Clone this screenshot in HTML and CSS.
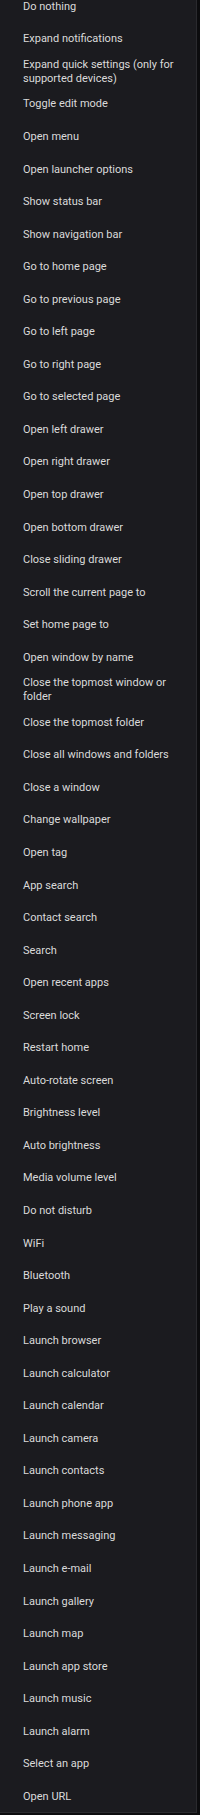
FILE: index.html
```html
<!DOCTYPE html>
<html lang="en">
<head>
    <meta charset="UTF-8">
    <meta name="viewport" content="width=device-width, initial-scale=1.0">
    <title>Actions</title>
    <link rel="stylesheet" href="styles.css">
</head>
<body>
    <div class="panel">
        <ul class="acciones">
            <li>Do nothing</li>
            <li>Expand notifications</li>
            <li>Expand quick settings (only for supported devices)</li>
            <li>Toggle edit mode</li>
            <li>Open menu</li>
            <li>Open launcher options</li>
            <li>Show status bar</li>
            <li>Show navigation bar</li>
            <li>Go to home page</li>
            <li>Go to previous page</li>
            <li>Go to left page</li>
            <li>Go to right page</li>
            <li>Go to selected page</li>
            <li>Open left drawer</li>
            <li>Open right drawer</li>
            <li>Open top drawer</li>
            <li>Open bottom drawer</li>
            <li>Close sliding drawer</li>
            <li>Scroll the current page to</li>
            <li>Set home page to</li>
            <li>Open window by name</li>
            <li>Close the topmost window or folder</li>
            <li>Close the topmost folder</li>
            <li>Close all windows and folders</li>
            <li>Close a window</li>
            <li>Change wallpaper</li>
            <li>Open tag</li>
            <li>App search</li>
            <li>Contact search</li>
            <li>Search</li>
            <li>Open recent apps</li>
            <li>Screen lock</li>
            <li>Restart home</li>
            <li>Auto-rotate screen</li>
            <li>Brightness level</li>
            <li>Auto brightness</li>
            <li>Media volume level</li>
            <li>Do not disturb</li>
            <li>WiFi</li>
            <li>Bluetooth</li>
            <li>Play a sound</li>
            <li>Launch browser</li>
            <li>Launch calculator</li>
            <li>Launch calendar</li>
            <li>Launch camera</li>
            <li>Launch contacts</li>
            <li>Launch phone app</li>
            <li>Launch messaging</li>
            <li>Launch e-mail</li>
            <li>Launch gallery</li>
            <li>Launch map</li>
            <li>Launch app store</li>
            <li>Launch music</li>
            <li>Launch alarm</li>
            <li>Select an app</li>
            <li>Open URL</li>
        </ul>
    </div>
</body>
</html>
```

FILE: styles.css
```css
html, body {
    margin: 0;
    height: 100%;
}
body {
    background-color: #0c0c0e;
    font-family: Roboto, "Noto Sans", sans-serif;
    overflow: hidden;
}
.panel {
    width: 196px;
    height: 1812px;
    background-color: #1b1b1f;
    border-right: 1px solid #2a2a2e;
    border-bottom: 1px solid #2a2a2e;
    overflow: hidden;
}
.acciones {
    list-style: none;
    margin: -9.5px 0 0 0;
    padding: 0;
}
.acciones li {
    height: 32.56px;
    display: flex;
    align-items: center;
    padding: 0 20px 0 23px;
    color: #dadada;
    font-size: 11px;
    line-height: 14px;
}
```
